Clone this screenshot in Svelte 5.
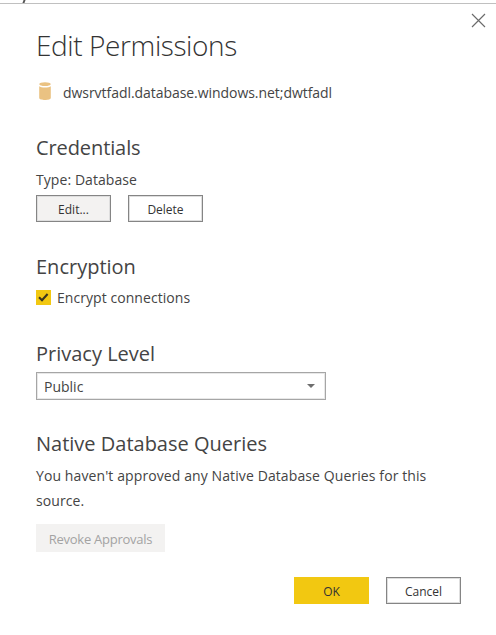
<script>
  let encrypted = $state(true);
</script>

<div class="page">
  <div class="backdrop"><i></i></div>
  <main class="dialog">
    <button class="close" aria-label="Close">
      <svg width="15" height="15" viewBox="0 0 15 15"><path d="M1 1 14 14M14 1 1 14" fill="none" stroke="#6b6b6b" stroke-width="1.15" /></svg>
    </button>
    <h1>Edit Permissions</h1>
    <div class="source">
      <svg width="12" height="18" viewBox="0 0 12 18">
        <path d="M0.2 4.3V16C0.2 18.6 11.8 18.6 11.8 16V4.3C10 5.9 2 5.9 .2 4.3Z" fill="#eac282" />
        <ellipse cx="6" cy="2.2" rx="5.7" ry="1.9" fill="#eac282" />
      </svg>
      <span class="server">dwsrvtfadl.database.windows.net;dwtfadl</span>
    </div>

    <section class="credentials">
      <h2 class="tight">Credentials</h2>
      <div class="type">Type: Database</div>
      <div class="buttons">
        <button class="btn shaded">Edit...</button>
        <button class="btn">Delete</button>
      </div>
    </section>

    <section class="encryption">
      <h2>Encryption</h2>
      <button class="check" role="checkbox" aria-checked={encrypted} onclick={() => (encrypted = !encrypted)}>
        <span class="box">
          {#if encrypted}
            <svg width="15" height="15" viewBox="0 0 15 15"><path d="M3 7.3 6 10.3 11.6 4" fill="none" stroke="#3a3520" stroke-width="2.1" /></svg>
          {/if}
        </span>
        <span class="label">Encrypt connections</span>
      </button>
    </section>

    <section class="privacy">
      <h2>Privacy Level</h2>
      <div class="select">
        <span>Public</span>
        <svg width="8" height="4" viewBox="0 0 8 4"><path d="M0 0H8L4 4Z" fill="#6e6e6e" /></svg>
      </div>
    </section>

    <section class="queries">
      <h2>Native Database Queries</h2>
      <p>You haven't approved any Native Database Queries for this<br />source.</p>
      <button class="revoke" disabled>Revoke Approvals</button>
    </section>

    <footer>
      <button class="btn primary">OK</button>
      <button class="btn">Cancel</button>
    </footer>
  </main>
</div>

<style>
  :global(body) { background: #fff; }
  .page {
    width: 496px;
    height: 635px;
    overflow: hidden;
    box-sizing: border-box;
    font-family: "Open Sans", "Noto Sans", sans-serif;
    font-size: 14px;
    color: #444;
    background: #fff;
  }
  .page * { box-sizing: border-box; }
  .backdrop { height: 3px; padding-left: 23px; overflow: hidden; }
  .backdrop i { display: block; width: 2px; height: 3px; background: #555; transform: skewX(-20deg); }
  .dialog {
    position: relative;
    height: 632px;
    border-top: 1px solid #c0c0c0;
    padding: 21px 35px 0 36px;
  }
  button { font: inherit; color: inherit; margin: 0; padding: 0; border: 0; background: none; }
  h1, h2, span, button { white-space: nowrap; }
  .close { position: absolute; right: 10px; top: 9px; width: 15px; height: 15px; display: flex; }
  h1 { margin: 0; height: 40px; line-height: 40px; font-size: 28px; font-weight: 300; letter-spacing: -0.4px; color: #333; }
  h2 { margin: 0; height: 28px; line-height: 30px; font-size: 20px; font-weight: 400; color: #444; }
  .tight { letter-spacing: -0.1px; }
  .source { display: flex; align-items: flex-start; height: 20px; margin-top: 17px; padding-left: 3px; gap: 12px; }
  .server { line-height: 22px; letter-spacing: -0.05px; }
  .credentials { margin-top: 31px; }
  .type { height: 20px; line-height: 20px; margin-top: 9px; letter-spacing: 0.07px; }
  .buttons { display: flex; gap: 17px; margin-top: 5px; }
  .btn {
    width: 75px;
    height: 27px;
    border: 1px solid #858585;
    box-shadow: inset 0 0 0 1px #dedede;
    background: #fff;
    color: #333;
    font-size: 12px;
    line-height: 25px;
    padding-top: 1px;
    display: flex;
    align-items: center;
    justify-content: center;
  }
  .shaded { background: #f3f2f1; }
  .primary { background: #f2c811; border-color: #f2c811; box-shadow: none; }
  .encryption { margin-top: 30px; }
  .check { display: flex; align-items: center; gap: 6px; height: 20px; margin-top: 7px; }
  .label { height: 20px; line-height: 22px; letter-spacing: 0.06px; }
  .box { width: 15px; height: 15px; background: #f2c811; display: flex; }
  .privacy { margin-top: 32px; }
  .select {
    width: 290px;
    height: 28px;
    margin-top: 5px;
    border: 1px solid #a6a6a6;
    box-shadow: inset 0 0 0 1px #e8e8e8;
    display: flex;
    align-items: center;
    justify-content: space-between;
    padding: 0 10px 0 7px;
  }
  .select span { padding-top: 1px; }
  .queries { margin-top: 29px; }
  p { margin: 6px 0 0; height: 50px; line-height: 25px; letter-spacing: 0.1px; }
  .revoke { display: flex; align-items: center; justify-content: center; width: 129px; height: 28px; margin-top: 11px; padding-top: 2px; background: #f3f2f1; color: #a3a3a3; font-size: 13px; letter-spacing: -0.25px; }
  footer { display: flex; justify-content: flex-end; gap: 17px; margin-top: 25px; }
</style>
